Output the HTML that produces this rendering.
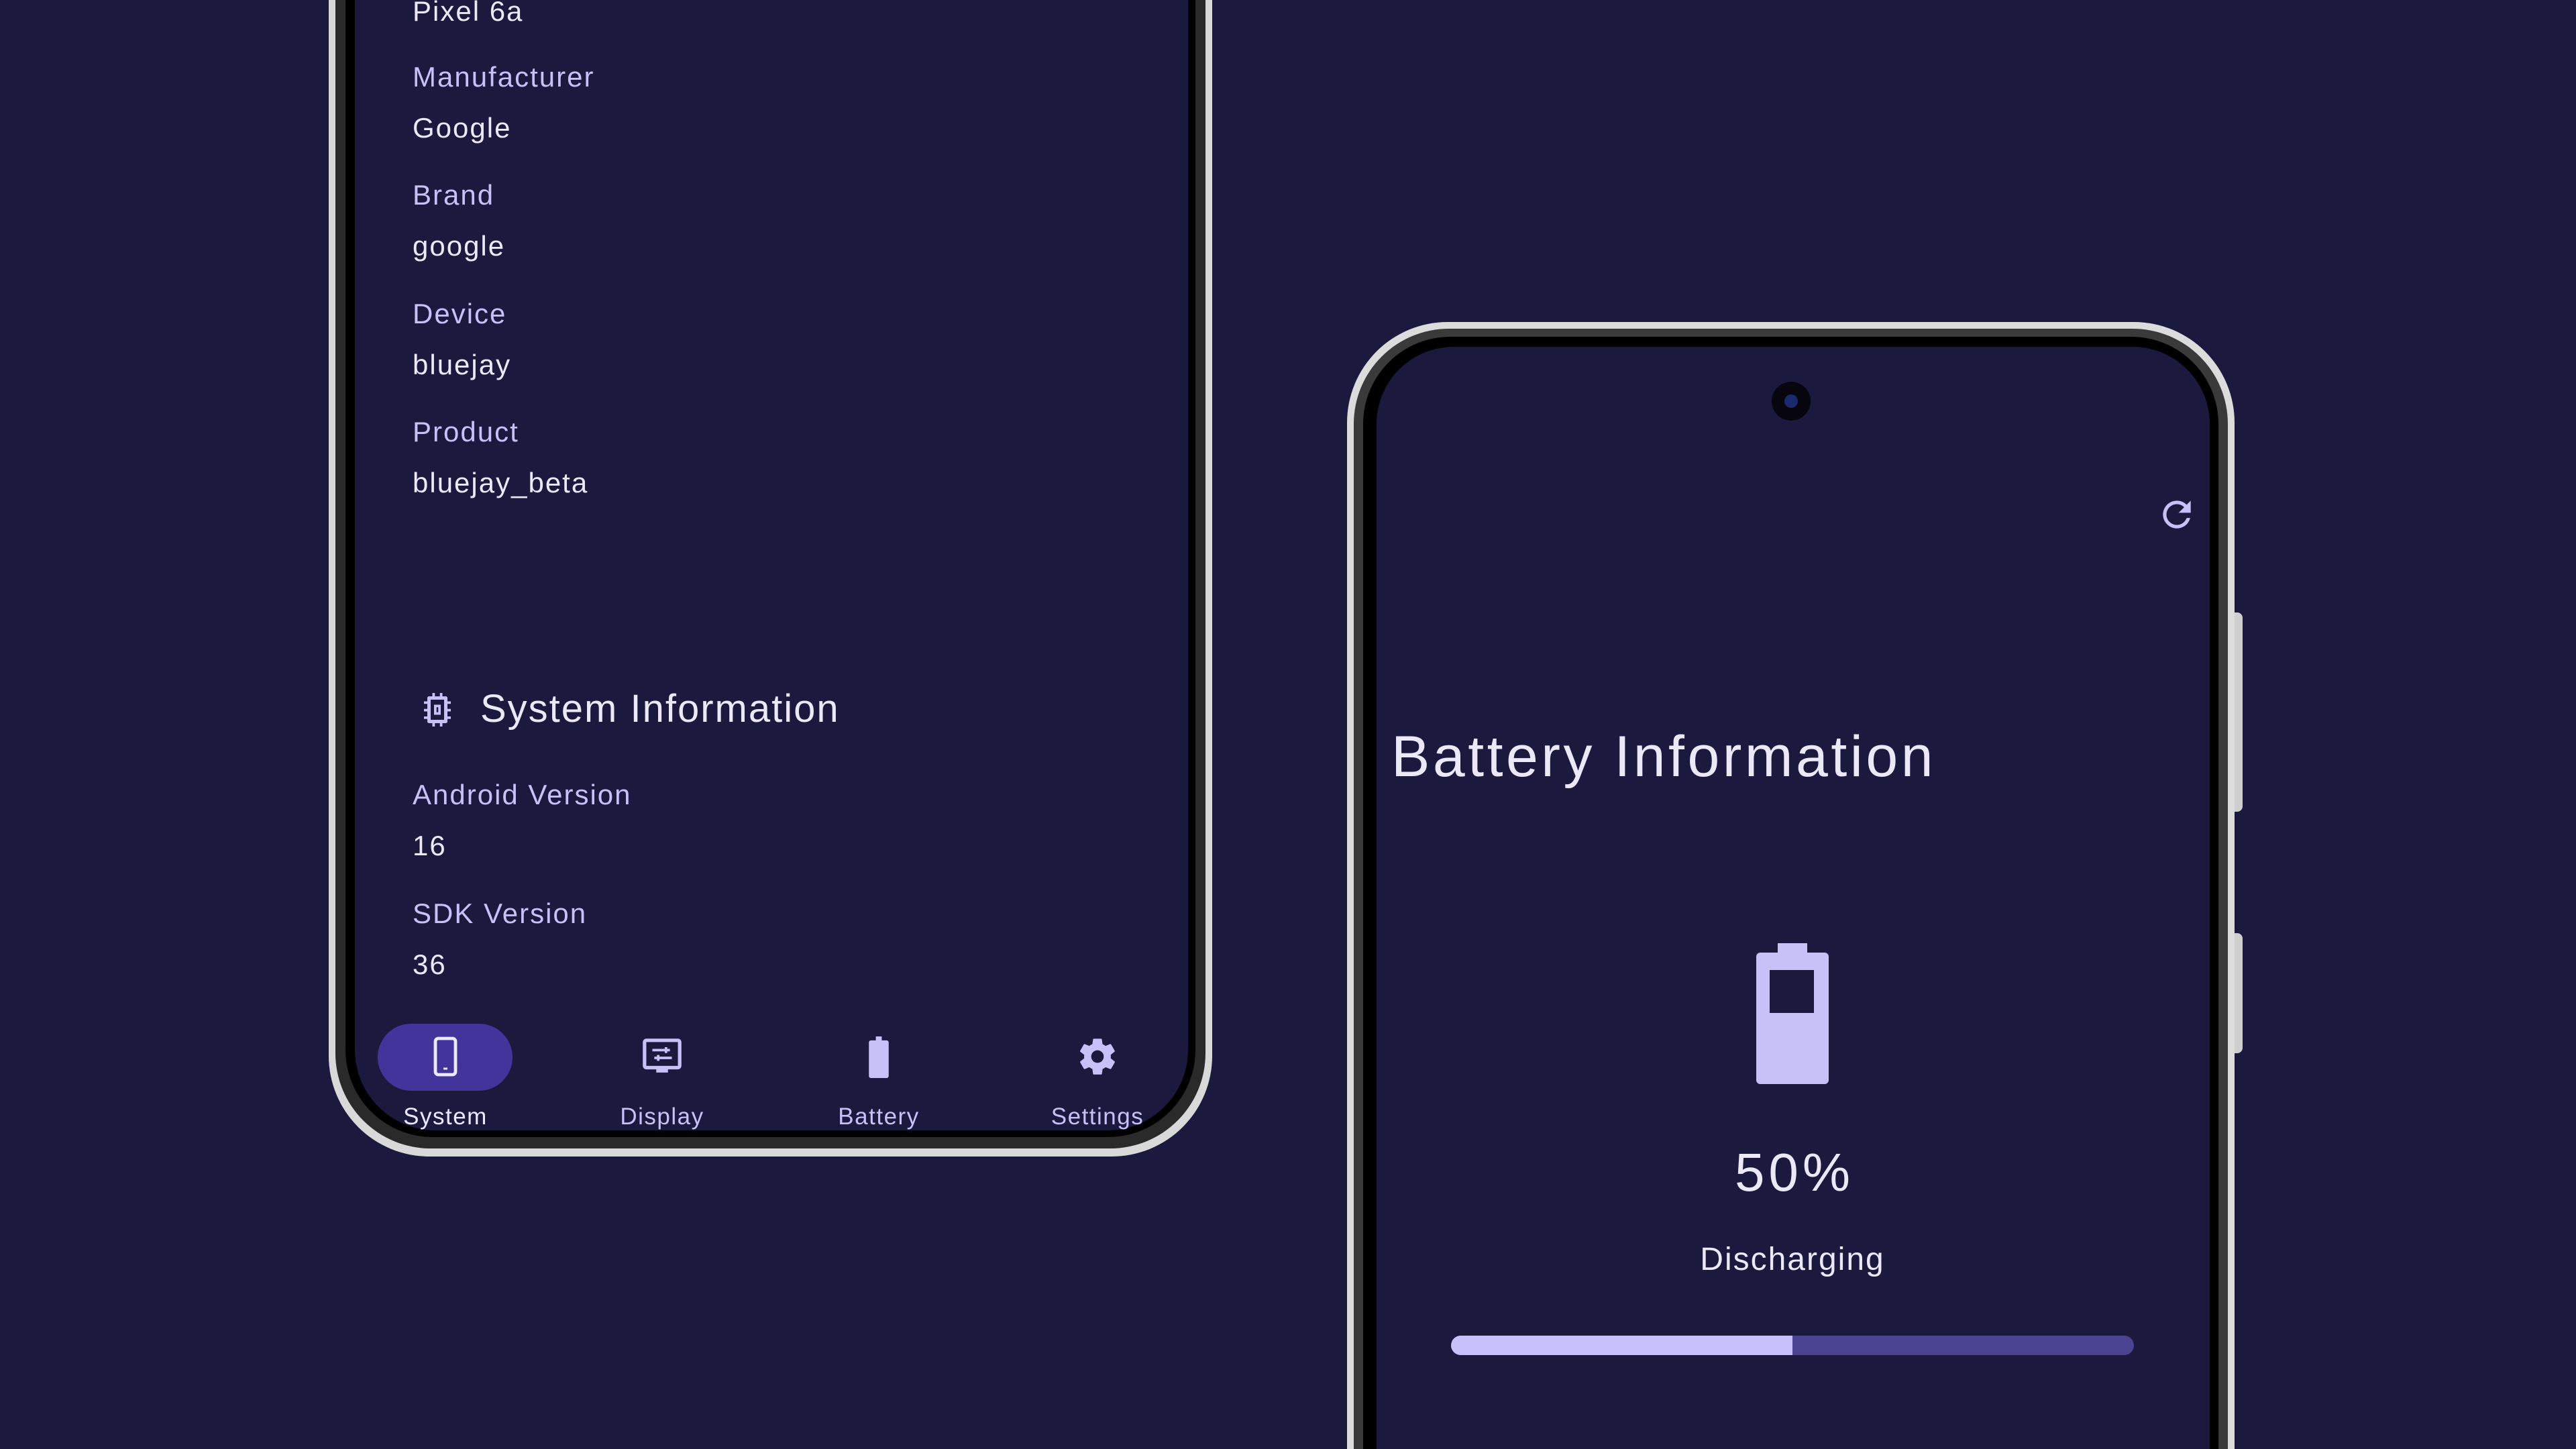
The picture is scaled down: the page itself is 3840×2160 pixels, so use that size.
<!DOCTYPE html>
<html style="overflow:hidden;width:3840px;height:2160px"><head><meta charset="utf-8"><style>
*{margin:0;padding:0;box-sizing:border-box}
body{width:3840px;height:2160px;background:#1c193e;position:relative;overflow:hidden;font-family:"Liberation Sans",sans-serif}
.a{position:absolute;white-space:nowrap;line-height:1}
.lab{color:#c6c1f7;font-size:42px;letter-spacing:2px}
.val{color:#ebe8f8;font-size:42px;letter-spacing:2px}
.nl{color:#c6c1f7;font-size:35px;letter-spacing:1.5px;transform:translateX(-50%)}
</style></head><body>
<!-- left phone -->
<div class="a" style="left:490px;top:-200px;width:1317px;height:1924px;border-radius:0 0 150px 150px;background:#d9d9d9;"></div>
<div class="a" style="left:500px;top:-200px;width:1297px;height:1912px;border-radius:0 0 142px 142px;background:#2a2a2a;"></div>
<div class="a" style="left:515px;top:-200px;width:1267px;height:1895px;border-radius:0 0 130px 130px;background:#000;"></div>
<div class="a" style="left:529px;top:-200px;width:1242px;height:1885px;border-radius:0 0 120px 120px;background:#1c193e;overflow:hidden;"></div>
<div class="a lab" style="left:615px;top:-4px;color:#ebe8f8">Pixel 6a</div>
<div class="a lab" style="left:615px;top:94px">Manufacturer</div>
<div class="a val" style="left:615px;top:170px">Google</div>
<div class="a lab" style="left:615px;top:270px">Brand</div>
<div class="a val" style="left:615px;top:346px">google</div>
<div class="a lab" style="left:615px;top:447px">Device</div>
<div class="a val" style="left:615px;top:523px">bluejay</div>
<div class="a lab" style="left:615px;top:623px">Product</div>
<div class="a val" style="left:615px;top:699px">bluejay_beta</div>
<svg class="a" style="left:622px;top:1028px" width="60" height="60" viewBox="0 0 24 24" fill="#c6c1f7"><path d="M9 2h1.5v2h3V2H15v2h2a1 1 0 0 1 1 1v2h2v1.5h-2v3h2V13h-2v3h2v1.5h-2V19a1 1 0 0 1-1 1h-2v2h-1.5v-2h-3v2H9v-2H7a1 1 0 0 1-1-1v-1.5H4V16h2v-3H4v-1.5h2v-3H4V7h2V5a1 1 0 0 1 1-1h2zM8 6v12h8V6zm2 3h4v6h-4zm1.5 1.5v3h1v-3z"/></svg>
<div class="a" style="left:716px;top:1028px;font-size:58px;letter-spacing:2px;color:#ebe8f8">System Information</div>
<div class="a lab" style="left:615px;top:1164px">Android Version</div>
<div class="a val" style="left:615px;top:1240px">16</div>
<div class="a lab" style="left:615px;top:1341px">SDK Version</div>
<div class="a val" style="left:615px;top:1417px">36</div>
<div class="a" style="left:563px;top:1526px;width:201px;height:100px;border-radius:50px;background:#41359c"></div>
<svg class="a" style="left:640px;top:1545px" width="48" height="60" viewBox="0 0 16 20"><rect x="3" y="1" width="10" height="18" rx="1.5" fill="none" stroke="#ebe8ff" stroke-width="1.6"/><rect x="7" y="15.5" width="2" height="1" fill="#ebe8ff"/></svg>
<svg class="a" style="left:955px;top:1547px" width="64" height="60" viewBox="0 0 22 20"><rect x="2" y="1" width="18" height="14" rx="1" fill="none" stroke="#c6c1f7" stroke-width="1.8"/><rect x="8" y="15" width="6" height="2.5" fill="#c6c1f7"/><path d="M6 6h9M13 4.5v3M16 10H7M9 8.5v3" stroke="#c6c1f7" stroke-width="1.3"/></svg>
<svg class="a" style="left:1292px;top:1545px" width="36" height="62" viewBox="0 0 12 21"><path d="M4.5 0h3v2H10a1 1 0 0 1 1 1v17a1 1 0 0 1-1 1H2a1 1 0 0 1-1-1V3a1 1 0 0 1 1-1h2.5z" fill="#c6c1f7"/></svg>
<svg class="a" style="left:1604px;top:1543px" width="64" height="64" viewBox="0 0 24 24"><path fill="#c6c1f7" d="M19.4 13c.04-.33.06-.66.06-1s-.02-.67-.06-1l2.1-1.650c.2-.15.25-.42.12-.64l-2-3.46c-.12-.22-.39-.3-.61-.22l-2.49 1c-.52-.4-1.080-.73-1.690-.98l-.38-2.65A.49.49 0 0 0 14 2h-4c-.25 0-.46.18-.49.42l-.38 2.65c-.61.25-1.17.59-1.69.98l-2.49-1c-.23-.09-.49 0-.61.22l-2 3.46c-.13.22-.07.49.12.64L4.57 11c-.04.33-.07.67-.07 1s.03.67.07 1l-2.11 1.65c-.19.15-.24.42-.12.64l2 3.46c.12.22.39.3.61.22l2.49-1c.52.4 1.08.73 1.69.98l.38 2.65c.03.24.24.42.49.42h4c.25 0 .46-.18.49-.42l.38-2.65c.61-.25 1.17-.59 1.69-.98l2.49 1c.23.09.49 0 .61-.22l2-3.46c.12-.22.07-.49-.12-.64zM12 15.5A3.5 3.5 0 1 1 12 8.5a3.5 3.5 0 0 1 0 7z"/></svg>
<div class="a" style="left:529px;top:1640px;width:1242px;height:45px;overflow:hidden">
<div class="a nl" style="left:135px;top:7px;color:#ebe8ff">System</div>
<div class="a nl" style="left:458px;top:7px">Display</div>
<div class="a nl" style="left:781px;top:7px">Battery</div>
<div class="a nl" style="left:1107px;top:7px">Settings</div>
</div>

<!-- right phone -->
<div class="a" style="left:3326px;top:913px;width:17px;height:297px;border-radius:0 8px 8px 0;background:#cfcfcf"></div>
<div class="a" style="left:3326px;top:1391px;width:17px;height:179px;border-radius:0 8px 8px 0;background:#cfcfcf"></div>
<div class="a" style="left:2008px;top:480px;width:1323px;height:1680px;border-radius:150px 150px 0 0;background:#dcdcdc"></div>
<div class="a" style="left:2018px;top:490px;width:1303px;height:1670px;border-radius:142px 142px 0 0;background:#3a3a3a"></div>
<div class="a" style="left:2032px;top:502px;width:1275px;height:1658px;border-radius:130px 130px 0 0;background:#000"></div>
<div class="a" style="left:2052px;top:517px;width:1242px;height:1643px;border-radius:115px 115px 0 0;background:#1c193e"></div>
<div class="a" style="left:2641px;top:569px;width:58px;height:58px;border-radius:50%;background:#07060f"></div>
<div class="a" style="left:2660px;top:588px;width:20px;height:20px;border-radius:50%;background:#1a2a6a"></div>
<svg class="a" style="left:3214px;top:736px" width="62" height="62" viewBox="0 0 24 24"><path fill="#c6c1f7" d="M17.65 6.35A7.96 7.960 0 0 0 12 4a8 8 0 1 0 7.73 10h-2.08A6 6 0 1 1 12 6c1.66 0 3.14.69 4.22 1.78L13 11h7V4z"/></svg>
<div class="a" style="left:2074px;top:1085px;font-size:86px;letter-spacing:4.5px;color:#ebe8f8">Battery Information</div>
<svg class="a" style="left:2618px;top:1406px" width="108" height="210" viewBox="0 0 108 210"><path fill="#c6c1f7" d="M32 0h44v14h26a6 6 0 0 1 6 6v184a6 6 0 0 1-6 6H6a6 6 0 0 1-6-6V20a6 6 0 0 1 6-6h26z"/><rect x="20" y="40" width="66" height="64" fill="#1c193e"/></svg>
<div class="a" style="left:2675px;top:1708px;transform:translateX(-50%);font-size:80px;letter-spacing:6px;color:#ebe8f8">50%</div>
<div class="a" style="left:2672px;top:1854px;transform:translateX(-50%);font-size:48px;letter-spacing:2px;color:#ebe8f8">Discharging</div>
<div class="a" style="left:2163px;top:1991px;width:1018px;height:29px;border-radius:15px;background:#4a4390"></div>
<div class="a" style="left:2163px;top:1991px;width:509px;height:29px;border-radius:15px 0 0 15px;background:#c6c1fb"></div>
</body></html>
